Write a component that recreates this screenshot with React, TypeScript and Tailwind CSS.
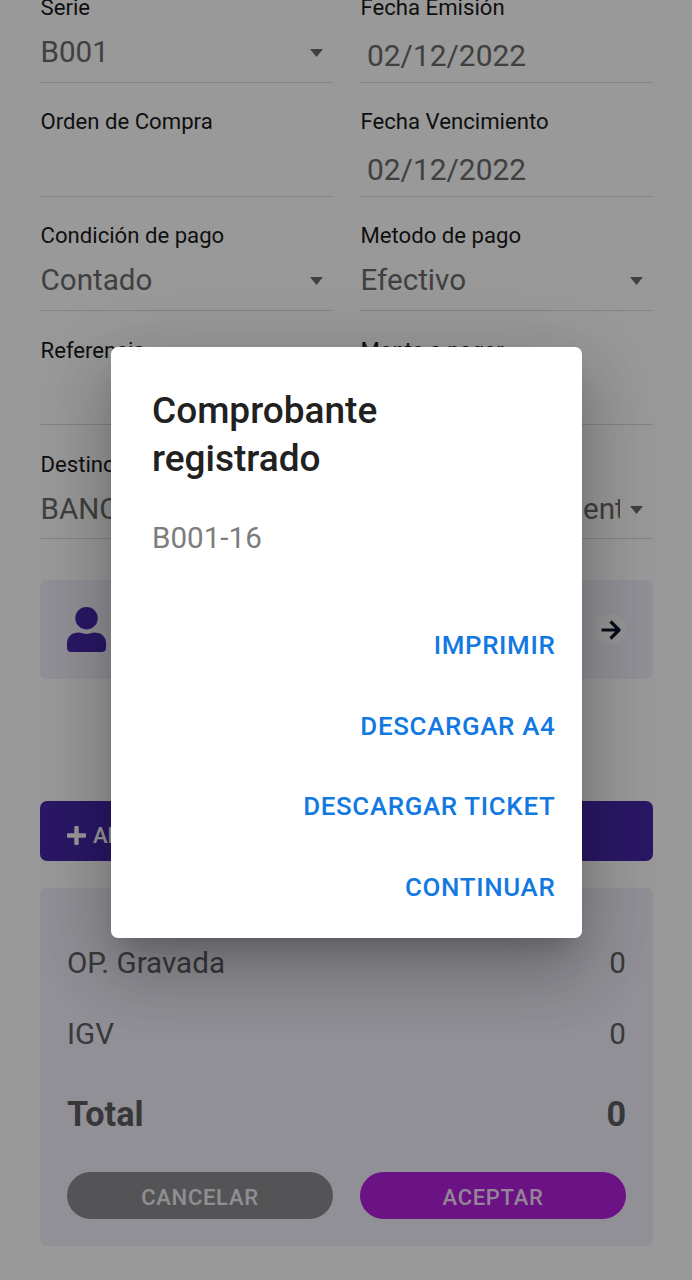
import React from "react";

type FieldProps = {
  label: string;
  value?: string;
  detail?: string;
  kind?: "select" | "date" | "text";
};

function Field({ label, value = "", detail, kind = "text" }: FieldProps) {
  return (
    <div className="flex h-[114.2px] min-w-0 flex-col border-b-[1.5px] border-[#dadada] pt-[24.6px]">
      <label className="pl-[0.5px] text-[22.15px] leading-[28px] whitespace-nowrap text-[#1a1a1a]">{label}</label>
      <div
        className={
          kind === "date"
            ? "flex items-center pt-[16.8px] pl-[7px] text-[29.9px] leading-[36px] text-[#6c6c6c]"
            : "flex items-center pt-[12.8px] pr-[10px] pl-[0.5px] text-[29.6px] leading-[36px] text-[#6c6c6c]"
        }
      >
        <span className="min-w-0 flex-1 overflow-hidden whitespace-nowrap">{value}</span>
        {detail && <span className="w-[37px] shrink-0 overflow-hidden whitespace-nowrap">{detail}</span>}
        {kind === "select" && (
          <svg className="mt-[2px] ml-[10px] h-[8px] w-[13px] shrink-0" viewBox="0 0 13 8" fill="#6c6c6c">
            <path d="M0 0H13L6.5 8Z" />
          </svg>
        )}
      </div>
    </div>
  );
}

function AmountRow({ label, amount }: { label: string; amount: string }) {
  return (
    <div className="flex h-[71px] items-center justify-between text-[29.6px] leading-[36px] text-[#616165]">
      <span>{label}</span>
      <span>{amount}</span>
    </div>
  );
}

const actions = ["IMPRIMIR", "DESCARGAR A4", "DESCARGAR TICKET", "CONTINUAR"];

export default function App() {
  return (
    <div className="relative h-[1280px] w-[692px] overflow-hidden bg-white font-['Roboto',sans-serif]">
      <main className="-mt-[31.6px] flex flex-col pr-[39px] pl-[40px]">
        <section className="grid grid-cols-2 gap-x-[27px]">
          <Field label="Serie" value="B001" kind="select" />
          <Field label="Fecha Emisión" value="02/12/2022" kind="date" />
          <Field label="Orden de Compra" />
          <Field label="Fecha Vencimiento" value="02/12/2022" kind="date" />
          <Field label="Condición de pago" value="Contado" kind="select" />
          <Field label="Metodo de pago" value="Efectivo" kind="select" />
          <Field label="Referencia" />
          <Field label="Monto a pagar" />
          <div className="col-span-2">
            <Field label="Destino" value="BANCO DE CREDITO" detail="ent" kind="select" />
          </div>
        </section>

        <section className="mt-[40.4px] flex h-[99px] items-center justify-between rounded-[7px] bg-[#f2f0fa] pr-[27px] pl-[27px]">
          <svg className="h-[45px] w-[39px]" viewBox="0 0 39 45" fill="#4628aa">
            <circle cx="19.5" cy="11.2" r="11.2" />
            <path d="M11 25.5Q14 25.5 15.5 26.2Q19.5 27.8 23.5 26.2Q25 25.5 28 25.5Q39 26.5 39 37V40.5Q39 45 34.5 45H4.5Q0 45 0 40.5V37Q0 26.5 11 25.5Z" />
          </svg>
          <span className="mt-[1px] flex h-[31px] w-[31px] items-center justify-center rounded-full bg-[#fafafa]">
            <svg className="h-[20px] w-[20px]" viewBox="0 0 20 20" fill="none" stroke="#0c1526" strokeWidth="3.2">
              <path d="M0.5 10H18M9.5 1.5L18 10L9.5 18.5" strokeLinejoin="round" />
            </svg>
          </span>
        </section>

        <button className="mt-[122px] flex h-[60px] items-center rounded-[7px] bg-[#4628aa] pt-[9px] pl-[27px] text-[22px] font-medium text-white">
          <svg className="mr-[7px] h-[19px] w-[19px]" viewBox="0 0 19 19" fill="currentColor">
            <rect x="0" y="7.3" width="19" height="4.4" rx="1" />
            <rect x="7.3" y="0" width="4.4" height="19" rx="1" />
          </svg>
          AÑADIR PRODUCTO
        </button>

        <section className="mt-[27px] flex h-[358px] flex-col rounded-[7px] bg-[#f2f0fa] px-[27px] pt-[39.4px]">
          <AmountRow label="OP. Gravada" amount="0" />
          <AmountRow label="IGV" amount="0" />
          <div className="flex h-[90px] items-center justify-between pt-[2px] text-[34.2px] font-bold text-[#5c5c60]">
            <span>Total</span>
            <span>0</span>
          </div>
          <div className="mt-[12.8px] grid grid-cols-2 gap-[27px] text-[22px] font-medium tracking-[0.7px]">
            <button className="h-[47px] rounded-full bg-[#8c8c90] pt-[4px] text-[#efeff2]">CANCELAR</button>
            <button className="h-[47px] rounded-full bg-[#b21edd] pt-[4px] text-[#f5dcfb]">ACEPTAR</button>
          </div>
        </section>
      </main>

      <div className="absolute inset-0 bg-black/40">
        <div
          role="dialog"
          className="absolute top-[346.5px] left-[111.4px] flex h-[591.5px] w-[471px] flex-col rounded-[7px] bg-white shadow-[0_18px_25px_-12px_rgba(0,0,0,0.2),0_40px_64px_5px_rgba(0,0,0,0.14),0_15px_77px_13px_rgba(0,0,0,0.12)]"
        >
          <h2 className="px-[40.6px] pt-[40px] text-[37px] leading-[48.5px] font-medium text-[#212121]">
            Comprobante
            <br />
            registrado
          </h2>
          <p className="mt-[36.5px] px-[40.6px] text-[29.6px] leading-[36px] text-[#7d7d7d]">B001-16</p>
          <div className="mt-[49px] flex flex-col items-end pr-[27px]">
            {actions.map((action) => (
              <button
                key={action}
                className="h-[80.6px] text-[25.9px] leading-[36px] font-medium tracking-[0.67px] text-[#1278e2]"
              >
                {action}
              </button>
            ))}
          </div>
        </div>
      </div>
    </div>
  );
}
